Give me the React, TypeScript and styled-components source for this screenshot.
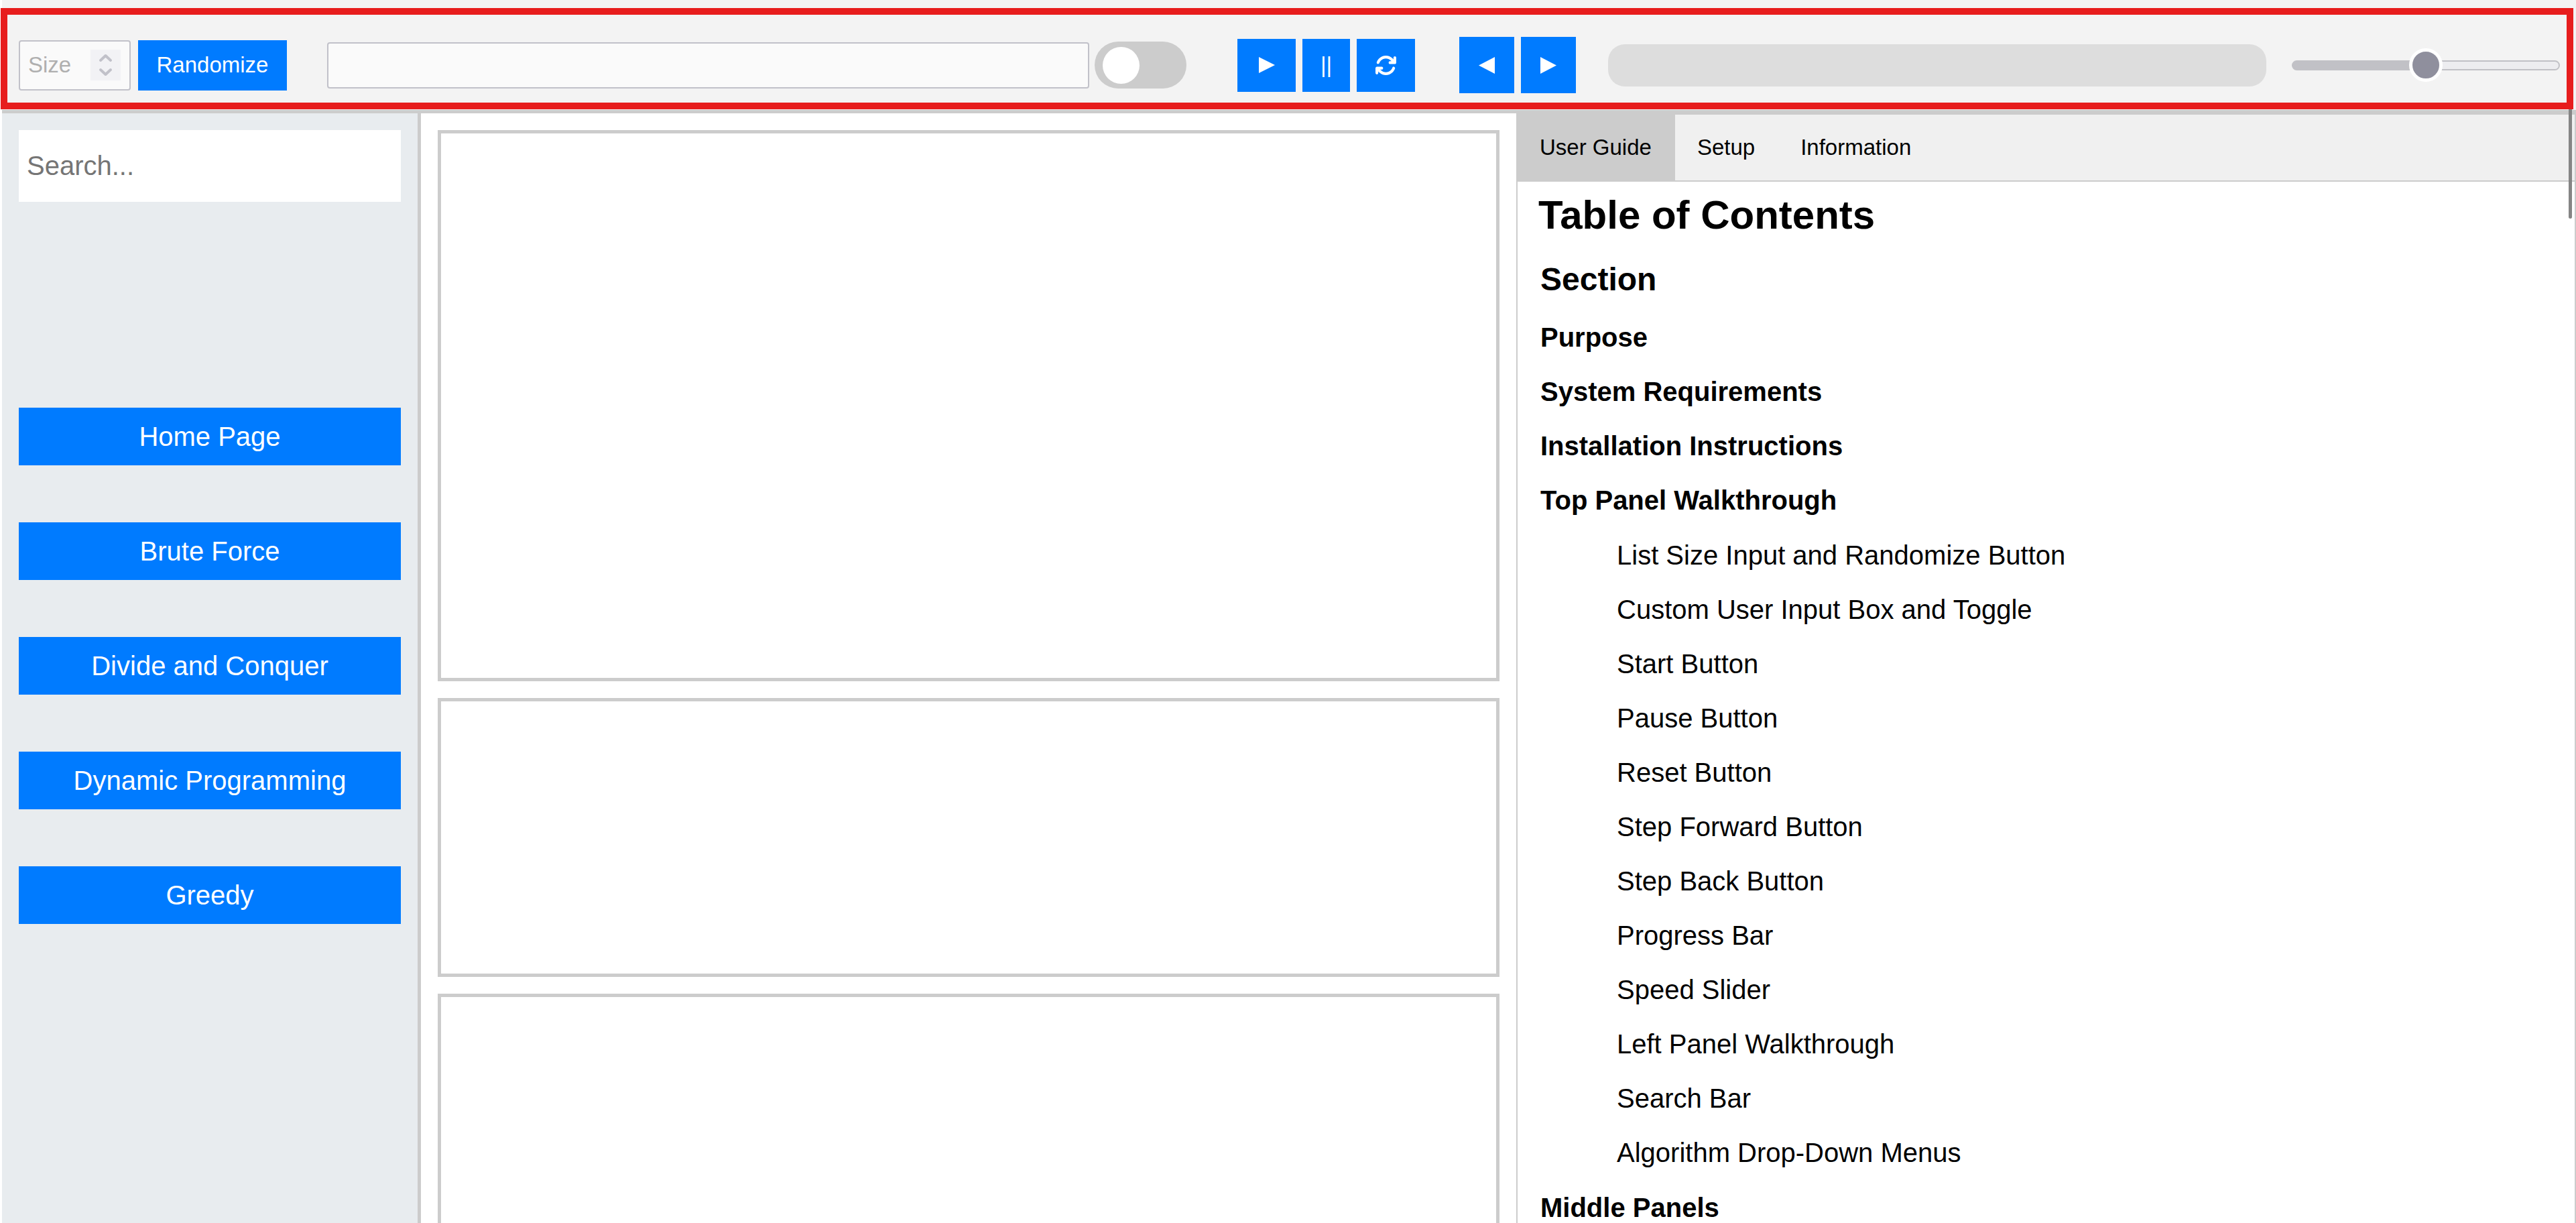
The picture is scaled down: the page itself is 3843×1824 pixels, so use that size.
import React, { useState } from "react";
import styled, { createGlobalStyle } from "styled-components";
import { FaArrowsRotate } from "react-icons/fa6";

const GlobalStyle = createGlobalStyle`
  *, *::before, *::after { box-sizing: border-box; }
  html, body, #root { height: 100%; }
  body {
    margin: 0;
    overflow: hidden;
    background: #fff;
    color: #000;
    font-family: "Liberation Sans", Arial, sans-serif;
    font-size: 40px;
  }
  button, input { font-family: inherit; margin: 0; }
`;

const Page = styled.div`
  display: flex;
  flex-direction: column;
  height: 100%;
  padding-left: 3px;
  overflow: hidden;
`;

const TopBar = styled.header`
  position: relative;
  flex: none;
  display: flex;
  align-items: center;
  height: 169px;
  padding: 30px 24px 0 25px;
  background: #f3f3f3;
  border-bottom: 5px solid #ccc;
`;

const Highlight = styled.div`
  position: absolute;
  inset: 12px 4px 1px -2px;
  border: 10px solid #e71d1d;
  pointer-events: none;
`;

const Group = styled.div<{ $gap: number; $after?: number; $grow?: number }>`
  display: flex;
  align-items: center;
  gap: ${(p) => p.$gap}px;
  margin-right: ${(p) => p.$after ?? 0}px;
  flex: ${(p) => (p.$grow ? `${p.$grow} 1 0` : "none")};
  min-width: 0;
`;

const fieldBox = `
  background: #fafafa;
  border: 2px solid #c1c1c9;
  border-radius: 4px;
`;

const SizeField = styled.div`
  ${fieldBox}
  display: flex;
  align-items: center;
  width: 167px;
  height: 75px;
  padding: 0 13px 0 12px;
`;

const SizeInput = styled.input`
  flex: 1;
  min-width: 0;
  padding: 0;
  border: 0;
  outline: 0;
  background: transparent;
  font-size: 33px;
  appearance: textfield;
  &::-webkit-inner-spin-button { display: none; }
  &::placeholder { color: #afafaf; }
`;

const Stepper = styled.svg`
  flex: none;
  width: 45px;
  height: 46px;
  background: #f2f2f5;
`;

const ListInput = styled.input`
  ${fieldBox}
  flex: 1;
  min-width: 0;
  height: 69px;
  padding: 0 12px;
  font-size: 33px;
  outline: 0;
`;

const Switch = styled.input`
  appearance: none;
  flex: none;
  display: flex;
  align-items: center;
  width: 137px;
  height: 70px;
  padding: 0 12px;
  border-radius: 35px;
  background: #ccc;
  &::before {
    content: "";
    width: 55px;
    height: 55px;
    border-radius: 50%;
    background: #fff;
  }
  &:checked { background: #007bff; justify-content: flex-end; }
`;

const Button = styled.button<{ $w?: number; $h: number; $size?: number }>`
  display: flex;
  align-items: center;
  justify-content: center;
  width: ${(p) => (p.$w ? `${p.$w}px` : "100%")};
  height: ${(p) => p.$h}px;
  padding: 0;
  border: 0;
  background: #007bff;
  color: #fff;
  font-size: ${(p) => p.$size ?? 33}px;
  cursor: pointer;
`;

const Progress = styled.div`
  flex: 1;
  height: 63px;
  border-radius: 25px;
  background: #ddd;
`;

const Slider = styled.input`
  appearance: none;
  width: 400px;
  height: 50px;
  background: transparent;
  &::-webkit-slider-runnable-track {
    height: 15px;
    border: 2px solid #c1c1c6;
    border-radius: 8px;
    background: linear-gradient(to right, #c1c1c6 50%, #ededf0 50%);
  }
  &::-webkit-slider-thumb {
    appearance: none;
    width: 50px;
    height: 50px;
    margin-top: -20px;
    border: 5px solid #fff;
    border-radius: 50%;
    background: #8f8f9d;
  }
`;

const Body = styled.main`
  flex: 1;
  min-height: 0;
  display: grid;
  grid-template-columns: 625fr 1634fr 1581fr;
  grid-template-rows: minmax(0, 1fr);
`;

const Sidebar = styled.nav`
  min-width: 0;
  padding: 25px;
  background: #e8ecef;
  border-right: 5px solid #ccc;
`;

const Search = styled.input`
  display: block;
  width: 100%;
  height: 107px;
  padding: 0 12px;
  border: 0;
  outline: 0;
  background: #fff;
  font-size: 40px;
  &::placeholder { color: #757575; }
`;

const Menu = styled.div`
  display: grid;
  row-gap: 85px;
  margin-top: 307px;
`;

const Stage = styled.section`
  display: flex;
  flex-direction: column;
  gap: 25px;
  min-width: 0;
  overflow: hidden;
  padding: 25px 25px 0;
`;

const Panel = styled.div<{ $h: number }>`
  flex: none;
  height: ${(p) => p.$h}px;
  border: 5px solid #ccc;
`;

const Guide = styled.section`
  position: relative;
  min-width: 0;
  border: solid #ccc;
  border-width: 2px 2px 0;
`;

const Tabs = styled.div`
  display: flex;
  height: 100px;
  background: #f0f0f0;
  border-bottom: 2px solid #ccc;
`;

const Tab = styled.button<{ $active: boolean }>`
  padding: 0 35px 0 33px;
  border: 0;
  background: ${(p) => (p.$active ? "#ccc" : "transparent")};
  color: #000;
  font-size: 33px;
  cursor: pointer;
`;

const ScrollThumb = styled.div`
  position: absolute;
  top: -8px;
  right: 4px;
  width: 5px;
  height: 163px;
  border-radius: 0 0 3px 3px;
  background: #858585;
`;

const Title = styled.h1`
  margin: 16px 0 0 31px;
  font-size: 60px;
  line-height: 68px;
`;

const Contents = styled.div`
  padding: 21px 0 0 34px;
`;

const SectionTitle = styled.h2`
  margin: 0 0 6px;
  font-size: 48px;
  line-height: 81px;
`;

const List = styled.ul<{ $nested?: boolean }>`
  margin: 0;
  padding: ${(p) => (p.$nested ? "1px 0 1px 114px" : "0")};
  list-style: none;
  line-height: 81px;
  font-weight: ${(p) => (p.$nested ? 400 : 700)};
`;

const Triangle = ({ left, h }: { left?: boolean; h: number }) => (
  <svg width="24" height={h} viewBox="0 0 24 24" preserveAspectRatio="none" aria-hidden="true">
    <path d={left ? "M24 0V24L0 12Z" : "M0 0V24L24 12Z"} fill="#fff" />
  </svg>
);

const algorithms = ["Home Page", "Brute Force", "Divide and Conquer", "Dynamic Programming", "Greedy"];
const tabs = ["User Guide", "Setup", "Information"];
const contents: { title: string; items?: string[] }[] = [
  { title: "Purpose" },
  { title: "System Requirements" },
  { title: "Installation Instructions" },
  {
    title: "Top Panel Walkthrough",
    items: [
      "List Size Input and Randomize Button",
      "Custom User Input Box and Toggle",
      "Start Button",
      "Pause Button",
      "Reset Button",
      "Step Forward Button",
      "Step Back Button",
      "Progress Bar",
      "Speed Slider",
      "Left Panel Walkthrough",
      "Search Bar",
      "Algorithm Drop-Down Menus",
    ],
  },
  { title: "Middle Panels" },
];

export default function App() {
  const [tab, setTab] = useState(tabs[0]);
  return (
    <Page>
      <GlobalStyle />
      <TopBar>
        <Group $gap={11} $after={60}>
          <SizeField>
            <SizeInput type="number" placeholder="Size" aria-label="Size" />
            <Stepper viewBox="0 0 45 46" aria-hidden="true">
              <path d="M15 16L22.5 9L30 16M15 30L22.5 37L30 30" fill="none" stroke="#c1c1c9" strokeWidth="4" strokeLinecap="round" strokeLinejoin="round" />
            </Stepper>
          </SizeField>
          <Button $w={222} $h={75}>Randomize</Button>
        </Group>
        <Group $gap={8} $after={76} $grow={1282}>
          <ListInput type="text" aria-label="Custom list" />
          <Switch type="checkbox" role="switch" aria-label="Use custom list" />
        </Group>
        <Group $gap={10} $after={66}>
          <Button $w={87} $h={79} aria-label="Start"><Triangle h={24} /></Button>
          <Button $w={71} $h={79} aria-label="Pause">||</Button>
          <Button $w={87} $h={79} aria-label="Reset"><FaArrowsRotate size={33} /></Button>
        </Group>
        <Group $gap={10} $after={48}>
          <Button $w={82} $h={84} aria-label="Step back"><Triangle left h={25} /></Button>
          <Button $w={82} $h={84} aria-label="Step forward"><Triangle h={25} /></Button>
        </Group>
        <Group $gap={0} $after={38} $grow={982}>
          <Progress role="progressbar" aria-label="Progress" aria-valuenow={0} />
        </Group>
        <Slider type="range" aria-label="Speed" defaultValue={50} />
        <Highlight />
      </TopBar>
      <Body>
        <Sidebar>
          <Search type="search" placeholder="Search..." aria-label="Search" />
          <Menu>
            {algorithms.map((name) => (
              <Button key={name} $h={86} $size={40}>{name}</Button>
            ))}
          </Menu>
        </Sidebar>
        <Stage>
          <Panel $h={822} />
          <Panel $h={416} />
          <Panel $h={822} />
        </Stage>
        <Guide>
          <Tabs role="tablist">
            {tabs.map((name) => (
              <Tab key={name} role="tab" aria-selected={name === tab} $active={name === tab} onClick={() => setTab(name)}>
                {name}
              </Tab>
            ))}
          </Tabs>
          <Title>Table of Contents</Title>
          <Contents>
            <SectionTitle>Section</SectionTitle>
            <List>
              {contents.map(({ title, items }) => (
                <li key={title}>
                  {title}
                  {items && (
                    <List $nested>
                      {items.map((item) => (
                        <li key={item}>{item}</li>
                      ))}
                    </List>
                  )}
                </li>
              ))}
            </List>
          </Contents>
          <ScrollThumb />
        </Guide>
      </Body>
    </Page>
  );
}
